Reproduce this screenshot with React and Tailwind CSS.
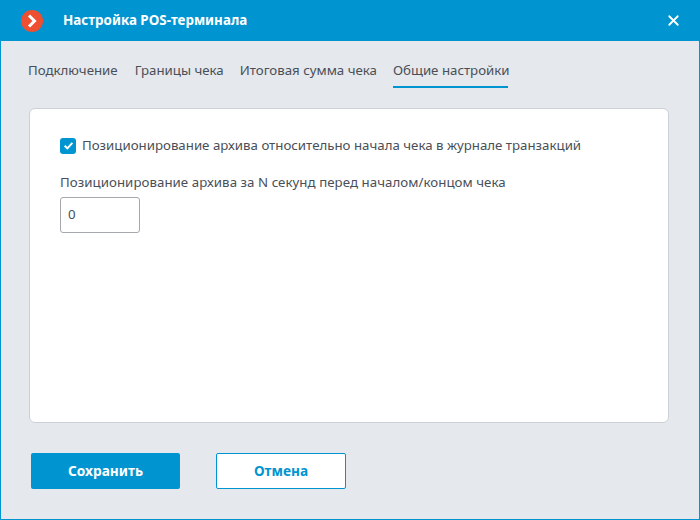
import { X } from 'lucide-react'

const TABS = ['Подключение', 'Границы чека', 'Итоговая сумма чека']

export default function App() {
  return (
    <div className="flex h-[520px] w-[700px] flex-col border-x border-b border-[#0095d0] bg-[#e5e8ed] font-['Noto_Sans',sans-serif] text-[13.27px] text-[#4a4f57]">
      <div className="flex h-[41px] items-center justify-between bg-[#0095d0] pl-5 pr-[17px] text-white">
        <div className="flex items-center gap-[20px]">
          <svg width="22" height="22" viewBox="0 0 22 22">
            <circle cx="11" cy="11" r="11" fill="#ee4f30" />
            <path d="M8 5.5 L13.5 11 L8 16.5" fill="none" stroke="#fff" strokeWidth="3" />
          </svg>
          <span className="text-[13.4px] font-bold">Настройка POS-терминала</span>
        </div>
        <X size={17} strokeWidth={2.5} />
      </div>

      <div className="flex gap-4 px-[27px] pt-5">
        {TABS.map((t, i) => (
          <div key={t} className={i === 0 ? 'mr-px h-[27px]' : 'h-[27px]'}>
            {t}
          </div>
        ))}
        <div className="h-[27px] w-[115px] whitespace-nowrap border-b-2 border-[#0095d0]">Общие настройки</div>
      </div>

      <div className="ml-[28px] mt-5 flex h-[315px] w-[640px] flex-col rounded-md border border-[#cdd0d5] bg-white pl-[30px] pt-[27px]">
        <div className="flex items-center gap-[6px]">
          <span className="flex h-4 w-4 items-center justify-center rounded-[3px] bg-[#0095d0]">
            <svg width="11" height="11" viewBox="0 0 10 10">
              <path d="M1.5 5.2 L4 7.6 L8.5 2.6" fill="none" stroke="#fff" strokeWidth="1.8" />
            </svg>
          </span>
          <span>Позиционирование архива относительно начала чека в журнале транзакций</span>
        </div>
        <div className="mt-[17px] tracking-[0.05px]">Позиционирование архива за N секунд перед началом/концом чека</div>
        <div className="mt-[4px] flex h-9 w-20 items-center rounded-[3px] border border-[#a5a8ad] pl-[7px]">0</div>
      </div>

      <div className="mt-[30px] flex gap-9 pl-[30px]">
        <button className="h-9 w-[149px] rounded-[2px] bg-[#0095d0] text-[13.7px] font-bold text-white">Сохранить</button>
        <button className="h-9 w-[130px] rounded-[2px] border border-[#0095d0] bg-white text-[13.7px] font-bold text-[#0095d0]">Отмена</button>
      </div>
    </div>
  )
}
